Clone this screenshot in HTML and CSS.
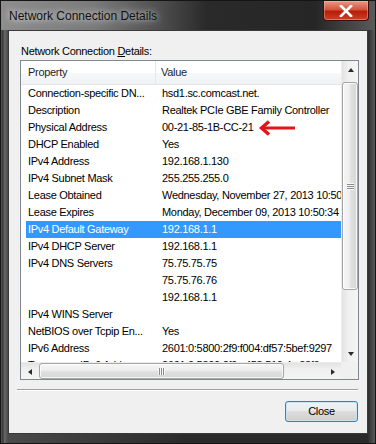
FILE: index.html
```html
<!DOCTYPE html>
<html lang="en">

<head>
    <meta charset="UTF-8">
    <meta name="viewport" content="width=device-width, initial-scale=1.0">
    <title>Network Connection Details</title>

    <link rel="stylesheet" href="styles.css">
</head>

<body>
    <div class="window">
        <div class="titlebar">
            <span class="title">Network Connection Details</span>
            <a class="close-x" href="javascript:;">
                <svg width="16" height="12" viewBox="0 0 16 12">
                    <path d="M3 1 L13 11 M13 1 L3 11" stroke="#fff" stroke-width="2.6" stroke-linecap="square" />
                </svg>
            </a>
        </div>

        <div class="client">
            <div class="caption">Network Connection <u>D</u>etails:</div>

            <div class="listbox">
                <div class="list-main">
                    <div class="list-view">
                        <div class="list-head">
                            <div class="head-prop">Property</div>
                            <div class="head-val">Value</div>
                        </div>
                        <div class="rows">
                            <div class="row"><span class="prop">Connection-specific DN...</span><span class="val">hsd1.sc.comcast.net.</span></div>
                            <div class="row"><span class="prop">Description</span><span class="val">Realtek PCIe GBE Family Controller</span></div>
                            <div class="row"><span class="prop">Physical Address</span><span class="val">00-21-85-1B-CC-21</span></div>
                            <div class="row"><span class="prop">DHCP Enabled</span><span class="val">Yes</span></div>
                            <div class="row"><span class="prop">IPv4 Address</span><span class="val">192.168.1.130</span></div>
                            <div class="row"><span class="prop">IPv4 Subnet Mask</span><span class="val">255.255.255.0</span></div>
                            <div class="row"><span class="prop">Lease Obtained</span><span class="val">Wednesday, November 27, 2013 10:50:34 PM</span></div>
                            <div class="row"><span class="prop">Lease Expires</span><span class="val">Monday, December 09, 2013 10:50:34 PM</span></div>
                            <div class="row selected"><span class="prop">IPv4 Default Gateway</span><span class="val">192.168.1.1</span></div>
                            <div class="row"><span class="prop">IPv4 DHCP Server</span><span class="val">192.168.1.1</span></div>
                            <div class="row"><span class="prop">IPv4 DNS Servers</span><span class="val">75.75.75.75</span></div>
                            <div class="row"><span class="prop"></span><span class="val">75.75.76.76</span></div>
                            <div class="row"><span class="prop"></span><span class="val">192.168.1.1</span></div>
                            <div class="row"><span class="prop">IPv4 WINS Server</span><span class="val"></span></div>
                            <div class="row"><span class="prop">NetBIOS over Tcpip En...</span><span class="val">Yes</span></div>
                            <div class="row"><span class="prop">IPv6 Address</span><span class="val">2601:0:5800:2f9:f004:df57:5bef:9297</span></div>
                            <div class="row"><span class="prop">Temporary IPv6 Address</span><span class="val">2601:0:5800:2f9:c458:510:4c:83f6</span></div>
                        </div>
                    </div>

                    <div class="vscroll">
                        <div class="sb-btn"><span class="arrow-up"></span></div>
                        <div class="v-track">
                            <div class="v-thumb"><span class="grip"></span></div>
                        </div>
                        <div class="sb-btn"><span class="arrow-down"></span></div>
                    </div>
                </div>

                <div class="hscroll-row">
                    <div class="hscroll">
                        <div class="sb-btn"><span class="arrow-left"></span></div>
                        <div class="h-track">
                            <div class="h-thumb"><span class="hgrip"></span></div>
                        </div>
                        <div class="sb-btn"><span class="arrow-right"></span></div>
                    </div>
                    <div class="corner"></div>
                </div>

                <!-- 红色箭头指向物理地址 -->
                <svg class="pointer" width="38" height="16" viewBox="0 0 38 16">
                    <path d="M37 8 H5" stroke="#e3141b" stroke-width="3" />
                    <path d="M11 1.5 L3.5 8 L11 14.5" stroke="#e3141b" stroke-width="3.4" fill="none" />
                </svg>
            </div>

            <div class="sep"></div>

            <div class="actions">
                <a class="btn" href="javascript:;">Close</a>
            </div>
        </div>
    </div>
</body>

</html>
```

FILE: styles.css
```css
* {
    margin: 0;
    padding: 0;
    box-sizing: border-box;
}

a {
    text-decoration: none;
    color: #000;
}

body {
    background-color: #1c1c1c;
    font-family: "Liberation Sans", Arial, sans-serif;
    font-size: 11px;
    letter-spacing: -0.3px;
    color: #000;
}

.window {
    width: 376px;
    height: 444px;
    display: flex;
    flex-direction: column;
    padding: 0 7px 9px 7px;
    background: linear-gradient(90deg, #5e5e5e 0, #2e2e2e 2px, #6a6a6a 3px, #4a4a4a 7px, #2a2a2a 50%, #2a2a2a 98%, #5a5a5a 100%);
    border: 1px solid #151515;
}

.titlebar {
    height: 29px;
    display: flex;
    justify-content: space-between;
    margin: 0 -7px;
    padding: 0 6px 0 8px;
    background: linear-gradient(90deg, #8e8e8e 0, #7a7a7a 25%, #505050 42%, #2a2a2a 55%, #262626 84%, #5a5a5a 100%);
}

.title {
    font-size: 12px;
    letter-spacing: 0;
    line-height: 30px;
    color: #101010;
    text-shadow: 0 0 6px rgba(255, 255, 255, 0.7), 0 0 10px rgba(255, 255, 255, 0.5);
}

.close-x {
    width: 46px;
    height: 20px;
    display: flex;
    justify-content: center;
    align-items: center;
    border: 1px solid #3a1010;
    border-top: none;
    border-radius: 0 0 4px 4px;
    background: linear-gradient(#e89a88, #d4553d 45%, #b81e0a 55%, #cc4028);
    box-shadow: inset 0 0 0 1px rgba(255, 200, 190, 0.4);
}

.client {
    flex: 1;
    border: 1px solid #3a3a3a;
    background-color: #f0f0f0;
    padding: 12px 0 0 0;
}

.caption {
    margin-left: 12px;
    height: 16px;
    line-height: 16px;
    color: #000;
}

.caption u {
    text-decoration: underline;
}

.listbox {
    position: relative;
    width: 339px;
    height: 320px;
    margin: 1px 0 0 11px;
    border: 1px solid #828790;
    background-color: #fff;
}

.list-main {
    display: flex;
    height: 301px;
}

.list-view {
    width: 320px;
    overflow: hidden;
}

.list-head {
    display: flex;
    height: 24px;
    line-height: 23px;
    color: #1e1e1e;
    border-bottom: 1px solid #e5e5e5;
    background: linear-gradient(#ffffff, #ffffff 50%, #f7f8fa 50%, #f1f2f4);
}

.head-prop {
    width: 135px;
    padding-left: 7px;
    border-right: 1px solid #e3e8ee;
}

.head-val {
    padding-left: 5px;
}

.row {
    display: flex;
    height: 17px;
    line-height: 17px;
    margin-left: 5px;
    white-space: nowrap;
}

.row .prop {
    width: 130px;
    flex: none;
    padding-left: 2px;
}

.row .val {
    padding-left: 6px;
}

.row.selected {
    background-color: #3399ff;
    color: #fff;
}

.vscroll {
    width: 17px;
    display: flex;
    flex-direction: column;
    background: linear-gradient(90deg, #e3e3e3, #f0f0f0 40%, #f4f4f4);
    border-left: 1px solid #ececec;
}

.sb-btn {
    width: 17px;
    height: 17px;
    flex: none;
    display: flex;
    justify-content: center;
    align-items: center;
}

.arrow-up {
    border-left: 3.5px solid transparent;
    border-right: 3.5px solid transparent;
    border-bottom: 4px solid #2b2b2b;
}

.arrow-down {
    border-left: 3.5px solid transparent;
    border-right: 3.5px solid transparent;
    border-top: 4px solid #2b2b2b;
}

.arrow-left {
    border-top: 3.5px solid transparent;
    border-bottom: 3.5px solid transparent;
    border-right: 4px solid #2b2b2b;
}

.arrow-right {
    border-top: 3.5px solid transparent;
    border-bottom: 3.5px solid transparent;
    border-left: 4px solid #2b2b2b;
}

.v-track {
    flex: 1;
    padding: 4px 0 0 0;
}

.v-thumb {
    width: 16px;
    height: 208px;
    display: flex;
    justify-content: center;
    align-items: center;
    border: 1px solid #a5a5a5;
    border-radius: 3px;
    background: linear-gradient(90deg, #f6f6f6, #eeeeee 45%, #e0e0e0 55%, #d6d6d6);
    box-shadow: inset 0 0 0 1px rgba(255, 255, 255, 0.8);
}

.grip {
    width: 7px;
    height: 7px;
    background: repeating-linear-gradient(#f8f8f8 0, #f8f8f8 1px, #8a8a8a 1px, #8a8a8a 2px);
}

.hscroll-row {
    display: flex;
    height: 17px;
}

.hscroll {
    width: 320px;
    display: flex;
    background: linear-gradient(#e3e3e3, #f0f0f0 40%, #f4f4f4);
    border-top: 1px solid #ececec;
}

.h-track {
    flex: 1;
    padding-right: 40px;
}

.h-thumb {
    height: 16px;
    margin-left: 1px;
    display: flex;
    justify-content: center;
    align-items: center;
    border: 1px solid #a5a5a5;
    border-radius: 3px;
    background: linear-gradient(#f6f6f6, #eeeeee 45%, #e0e0e0 55%, #d6d6d6);
    box-shadow: inset 0 0 0 1px rgba(255, 255, 255, 0.8);
}

.hgrip {
    width: 7px;
    height: 7px;
    background: repeating-linear-gradient(90deg, #f8f8f8 0, #f8f8f8 1px, #8a8a8a 1px, #8a8a8a 2px);
}

.corner {
    width: 17px;
    background-color: #f0f0f0;
}

.pointer {
    position: absolute;
    left: 237px;
    top: 59px;
}

.sep {
    height: 2px;
    margin: 9px 9px 0 8px;
    border-top: 1px solid #a0a0a0;
    border-bottom: 1px solid #ffffff;
}

.actions {
    display: flex;
    justify-content: flex-end;
    padding: 10px 9px 0 0;
}

.btn {
    width: 73px;
    height: 21px;
    line-height: 19px;
    text-align: center;
    font-size: 11px;
    border: 1px solid #3c7fb1;
    border-radius: 3px;
    background: linear-gradient(#f2f2f2, #ebebeb 45%, #dddddd 50%, #cfcfcf);
    box-shadow: inset 0 0 0 1px #c4e5f6;
}
```
